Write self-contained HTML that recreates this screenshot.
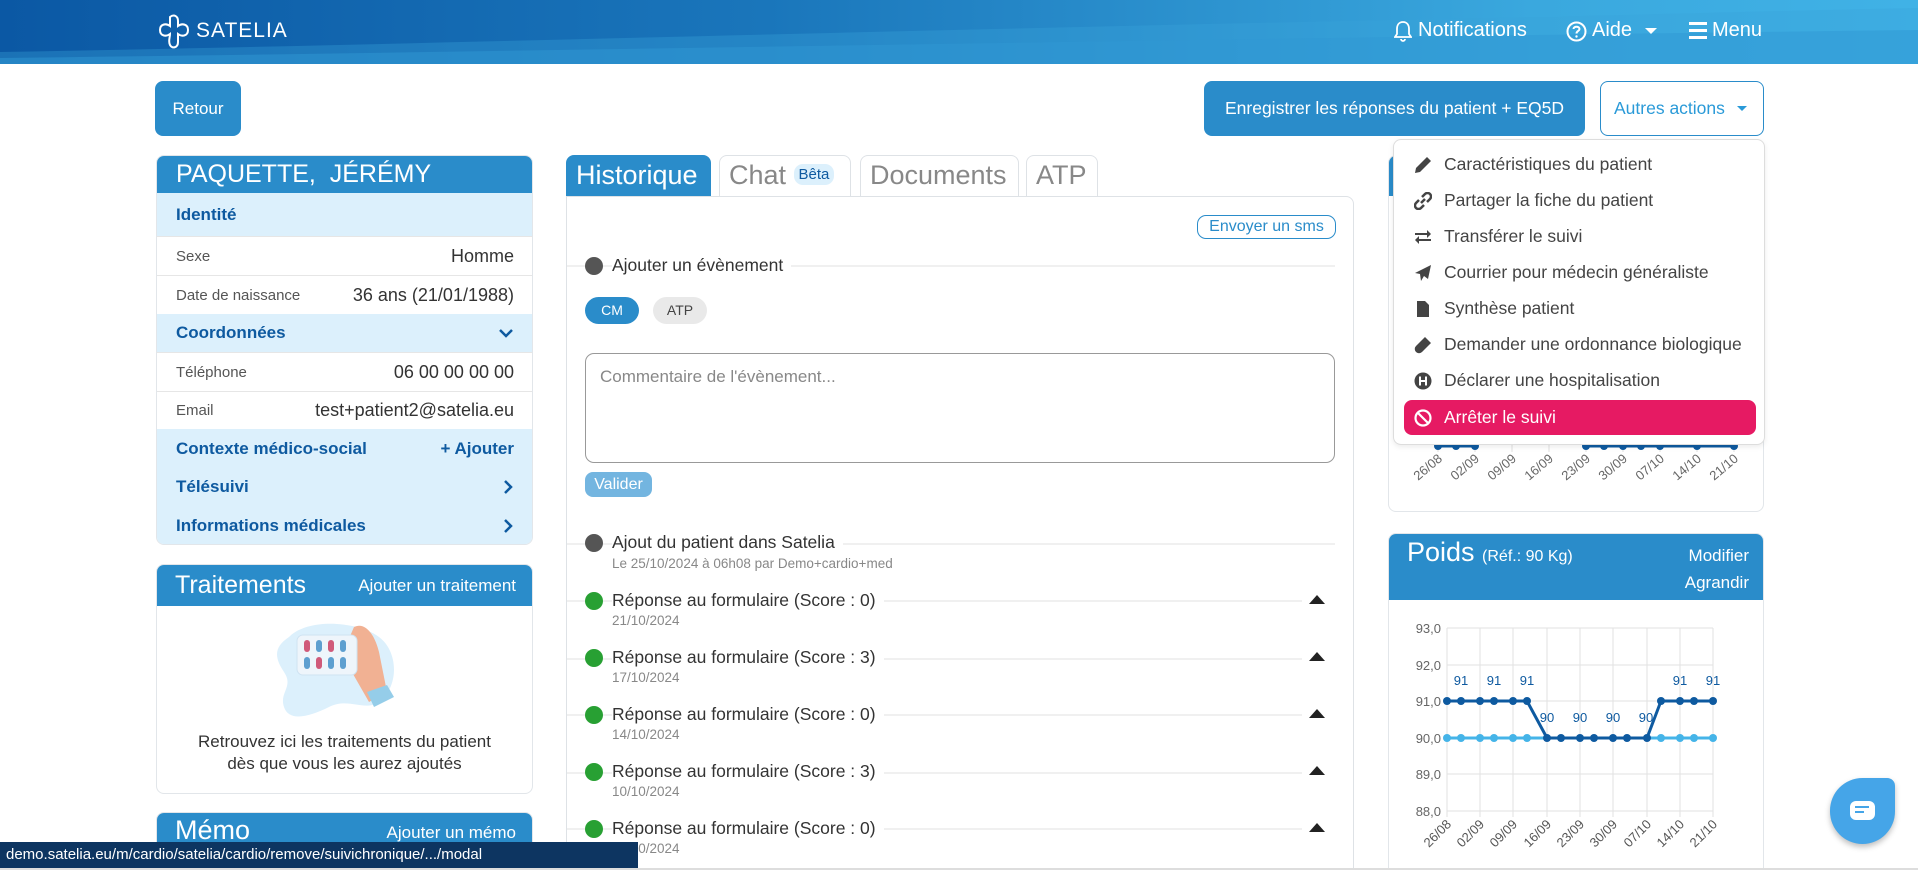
<!DOCTYPE html>
<html><head><meta charset="utf-8">
<style>
*{box-sizing:border-box;margin:0;padding:0}
html,body{width:1918px;height:870px;overflow:hidden}
body{background:#fff;font-family:"Liberation Sans",sans-serif;color:#333;position:relative}
.abs{position:absolute}
.hdr{position:absolute;left:0;top:0;width:1918px;height:64px;background:linear-gradient(90deg,#0b58a4 0%,#1a76bb 40%,#3aa8de 80%,#40b2e6 100%);overflow:hidden}
.nav{position:absolute;top:19px;color:#fff;font-size:20px}
.btn{position:absolute;background:#2a8cca;color:#fff;border-radius:8px;font-size:17px;display:flex;align-items:center;justify-content:center}
.card{position:absolute;border:1px solid #e2e6ea;border-radius:8px;overflow:hidden;background:#fff}
.ch{background:#2a8cca;color:#fff}
.row{position:absolute;left:0;width:100%;display:flex;justify-content:space-between;align-items:center;padding:0 18px 0 19px;border-top:1px solid #e6e6e6;font-size:16px}
.row .l{font-size:15px;color:#555}
.row .r{font-size:18px;color:#333}
.sec{background:#dcf0fc;color:#0e5aa0;font-weight:bold;font-size:17px;border-top:none}
.tab{position:absolute;top:155px;height:42px;border:1px solid #dee2e6;border-bottom:none;border-radius:8px 8px 0 0;font-size:27px;color:#888;padding:4px 9px 0}
.dot{position:absolute;width:18px;height:18px;border-radius:50%}
.ev{position:absolute;left:612px;font-size:17.5px;color:#333}
.sub{position:absolute;left:612px;font-size:13.5px;color:#888}
.line{position:absolute;height:2px;background:#f0f0f0}
.tri{position:absolute;left:1309px;width:0;height:0;border-left:8px solid transparent;border-right:8px solid transparent;border-bottom:9px solid #222}
.mi{position:absolute;left:1414px;font-size:17.5px;color:#444;display:flex;align-items:center}
.mi svg{width:18px;height:18px;margin-right:12px;fill:#444}
</style></head><body>

<div class="hdr">
<svg class="abs" style="left:0;top:0" width="1918" height="64"><path d="M0 64 L0 52 C400 45 900 30 1400 20 C1600 16 1800 10 1918 8 L1918 64Z" fill="#3aa3da" opacity=".35"/><path d="M0 64 L0 58 C500 52 1100 40 1918 30 L1918 64Z" fill="#2f98d3" opacity=".5"/></svg>
<svg class="abs" style="left:156px;top:14px" width="40" height="36" viewBox="0 0 40 36"><path d="M14 3 C18 0 22 2 22 7 L22 12 C26 9 32 10 32 16 C32 22 26 23 22 20 L22 28 C22 34 16 35 14 31 C12 27 14 24 14 20 C10 23 4 22 4 16 C4 10 10 9 14 12 Z" fill="none" stroke="#fff" stroke-width="2"/></svg>
<div class="nav" style="left:196px;top:19px;font-size:21px;letter-spacing:1px">SATELIA</div>
<svg class="abs" style="left:1394px;top:20px" width="18" height="22" viewBox="0 0 18 22"><path d="M9 2 C5 2 3 5 3 9 L3 14 L1 17 L17 17 L15 14 L15 9 C15 5 13 2 9 2Z M7 19 A2 2 0 0 0 11 19" fill="none" stroke="#fff" stroke-width="1.8"/></svg>
<div class="nav" style="left:1418px">Notifications</div>
<svg class="abs" style="left:1566px;top:21px" width="21" height="21" viewBox="0 0 21 21"><circle cx="10.5" cy="10.5" r="9" fill="none" stroke="#fff" stroke-width="2"/><path d="M7.5 8 C7.5 5 13.5 5 13.5 8 C13.5 10 10.5 10 10.5 12.5" fill="none" stroke="#fff" stroke-width="2"/><circle cx="10.5" cy="15.5" r="1.2" fill="#fff"/></svg>
<div class="nav" style="left:1592px">Aide</div>
<div class="abs" style="left:1645px;top:28px;border-left:6px solid transparent;border-right:6px solid transparent;border-top:6px solid #fff"></div>
<svg class="abs" style="left:1689px;top:22px" width="18" height="17"><rect y="0" width="18" height="3" fill="#fff"/><rect y="7" width="18" height="3" fill="#fff"/><rect y="14" width="18" height="3" fill="#fff"/></svg>
<div class="nav" style="left:1712px">Menu</div>
</div>

<div class="btn" style="left:155px;top:81px;width:86px;height:55px">Retour</div>
<div class="btn" style="left:1204px;top:81px;width:381px;height:55px;font-size:17.5px">Enregistrer les réponses du patient + EQ5D</div>
<div class="abs" style="left:1600px;top:81px;width:164px;height:55px;border:1px solid #2a8cca;border-radius:8px;color:#2a9ad8;font-size:17.5px;display:flex;align-items:center;padding-left:13px">Autres actions<span style="margin-left:12px;border-left:5px solid transparent;border-right:5px solid transparent;border-top:5px solid #2a9ad8"></span></div>

<!-- Left card -->
<div class="card" style="left:156px;top:155px;width:377px;height:390px">
<div class="ch" style="height:37px;font-size:25px;padding:4px 19px">PAQUETTE,&nbsp; JÉRÉMY</div>
<div class="row sec" style="top:37px;height:43px">Identité</div>
<div class="row" style="top:80px;height:39px"><span class="l">Sexe</span><span class="r">Homme</span></div>
<div class="row" style="top:119px;height:39px"><span class="l">Date de naissance</span><span class="r">36 ans (21/01/1988)</span></div>
<div class="row sec" style="top:158px;height:38px">Coordonnées<svg width="16" height="12" viewBox="0 0 16 12"><path d="M2 3 L8 9 L14 3" fill="none" stroke="#0e5aa0" stroke-width="2.5"/></svg></div>
<div class="row" style="top:196px;height:39px"><span class="l">Téléphone</span><span class="r">06 00 00 00 00</span></div>
<div class="row" style="top:235px;height:38px"><span class="l">Email</span><span class="r">test+patient2@satelia.eu</span></div>
<div class="row sec" style="top:273px;height:39px">Contexte médico-social<span>+ Ajouter</span></div>
<div class="row sec" style="top:312px;height:38px;border-top:none">Télésuivi<svg width="12" height="16" viewBox="0 0 12 16"><path d="M3 2 L9 8 L3 14" fill="none" stroke="#0e5aa0" stroke-width="2.5"/></svg></div>
<div class="row sec" style="top:350px;height:40px">Informations médicales<svg width="12" height="16" viewBox="0 0 12 16"><path d="M3 2 L9 8 L3 14" fill="none" stroke="#0e5aa0" stroke-width="2.5"/></svg></div>
</div>

<div class="card" style="left:156px;top:564px;width:377px;height:230px">
<div class="ch" style="height:41px;display:flex;justify-content:space-between;align-items:center;padding:0 16px 0 18px"><span style="font-size:25px">Traitements</span><span style="font-size:17px">Ajouter un traitement</span></div>
<svg class="abs" style="left:112px;top:52px" width="140" height="110" viewBox="0 0 140 110"><path d="M20 20 C40 0 90 5 110 20 C130 35 130 70 110 85 C95 95 80 80 60 90 C40 100 20 105 15 90 C10 75 25 70 15 55 C5 40 5 30 20 20Z" fill="#dcf0fc"/><path d="M85 10 C95 5 105 15 110 35 L118 75 L100 85 L80 50 L70 45 Z" fill="#f1b193"/><path d="M98 75 L118 68 L125 80 L105 90 Z" fill="#95cde9"/><rect x="28" y="18" width="60" height="40" rx="6" fill="#eef5fb" stroke="#cfe3f2"/><g fill="#d05a7a"><rect x="35" y="23" width="6" height="12" rx="3"/><rect x="59" y="23" width="6" height="12" rx="3"/><rect x="47" y="40" width="6" height="12" rx="3"/></g><g fill="#5d9fd0"><rect x="47" y="23" width="6" height="12" rx="3"/><rect x="71" y="23" width="6" height="12" rx="3"/><rect x="35" y="40" width="6" height="12" rx="3"/><rect x="59" y="40" width="6" height="12" rx="3"/><rect x="71" y="40" width="6" height="12" rx="3"/></g></svg>
<div class="abs" style="left:0;top:166px;width:100%;text-align:center;font-size:17px;line-height:22px;color:#333">Retrouvez ici les traitements du patient<br>dès que vous les aurez ajoutés</div>
</div>

<div class="card" style="left:156px;top:812px;width:377px;height:58px;border-radius:8px 8px 0 0">
<div class="ch" style="height:58px;display:flex;justify-content:space-between;align-items:flex-start;padding:2px 16px 0 18px"><span style="font-size:27px">Mémo</span><span style="font-size:17px;margin-top:8px">Ajouter un mémo</span></div>
</div>

<!-- Middle -->
<div class="tab" style="left:566px;width:145px;background:#2a8cca;color:#fff;border-color:#2a8cca">Historique</div>
<div class="tab" style="left:719px;width:132px">Chat <span style="font-size:15px;color:#0e5aa0;background:#dcf0fc;border-radius:9px;padding:2px 5px;vertical-align:5px">Bêta</span></div>
<div class="tab" style="left:860px;width:159px">Documents</div>
<div class="tab" style="left:1026px;width:72px">ATP</div>
<div class="abs" style="left:566px;top:196px;width:788px;height:680px;border:1px solid #dee2e6;border-radius:0 8px 0 0"></div>
<div class="abs" style="left:1197px;top:215px;width:139px;height:24px;border:1px solid #2a8cca;border-radius:9px;color:#2a8cca;font-size:16px;text-align:center;line-height:22px">Envoyer un sms</div>
<div class="line" style="left:567px;top:265px;width:768px"></div>
<div class="dot" style="left:585px;top:257px;background:#555"></div>
<div class="ev" style="top:255px;background:#fff;padding-right:8px">Ajouter un évènement</div>
<div class="abs" style="left:585px;top:297px;width:54px;height:27px;border-radius:14px;background:#2a8cca;color:#fff;font-size:14px;text-align:center;line-height:27px">CM</div>
<div class="abs" style="left:653px;top:297px;width:54px;height:27px;border-radius:14px;background:#e9e9e9;color:#444;font-size:14px;text-align:center;line-height:27px">ATP</div>
<div class="abs" style="left:585px;top:353px;width:750px;height:110px;border:1px solid #999;border-radius:9px;padding:13px 14px;color:#888;font-size:17px">Commentaire de l'évènement...</div>
<div class="abs" style="left:585px;top:472px;width:67px;height:25px;border-radius:8px;background:#73b5e0;color:#fff;font-size:16px;text-align:center;line-height:25px">Valider</div>

<div class="line" style="left:567px;top:543px;width:768px"></div>
<div class="dot" style="left:585px;top:534px;background:#555"></div>
<div class="ev" style="top:532px;background:#fff;padding-right:8px">Ajout du patient dans Satelia</div>
<div class="sub" style="top:556px">Le 25/10/2024 à 06h08 par Demo+cardio+med</div>

<div class="line" style="left:567px;top:600px;width:735px"></div><div class="dot" style="left:585px;top:592px;background:#28a033"></div><div class="ev" style="top:590px;background:#fff;padding-right:8px">Réponse au formulaire (Score : 0)</div><div class="sub" style="top:613px">21/10/2024</div><div class="tri" style="top:595px"></div>
<div class="line" style="left:567px;top:658px;width:735px"></div><div class="dot" style="left:585px;top:649px;background:#28a033"></div><div class="ev" style="top:647px;background:#fff;padding-right:8px">Réponse au formulaire (Score : 3)</div><div class="sub" style="top:670px">17/10/2024</div><div class="tri" style="top:652px"></div>
<div class="line" style="left:567px;top:714px;width:735px"></div><div class="dot" style="left:585px;top:706px;background:#28a033"></div><div class="ev" style="top:704px;background:#fff;padding-right:8px">Réponse au formulaire (Score : 0)</div><div class="sub" style="top:727px">14/10/2024</div><div class="tri" style="top:709px"></div>
<div class="line" style="left:567px;top:772px;width:735px"></div><div class="dot" style="left:585px;top:763px;background:#28a033"></div><div class="ev" style="top:761px;background:#fff;padding-right:8px">Réponse au formulaire (Score : 3)</div><div class="sub" style="top:784px">10/10/2024</div><div class="tri" style="top:766px"></div>
<div class="line" style="left:567px;top:828px;width:735px"></div><div class="dot" style="left:585px;top:820px;background:#28a033"></div><div class="ev" style="top:818px;background:#fff;padding-right:8px">Réponse au formulaire (Score : 0)</div><div class="sub" style="top:841px">07/10/2024</div><div class="tri" style="top:823px"></div>

<!-- Right column card 1 -->
<div class="card" style="left:1388px;top:155px;width:376px;height:357px">
<div class="ch" style="height:40px"></div>
<svg class="abs" style="left:0;top:0" width="376" height="357" font-family="Liberation Sans">
<g stroke="#e0e0e0"><line x1="49" y1="260" x2="49" y2="296"/><line x1="86" y1="260" x2="86" y2="296"/><line x1="123" y1="260" x2="123" y2="296"/><line x1="160" y1="260" x2="160" y2="296"/><line x1="197" y1="260" x2="197" y2="296"/><line x1="234" y1="260" x2="234" y2="296"/><line x1="271" y1="260" x2="271" y2="296"/><line x1="308" y1="260" x2="308" y2="296"/><line x1="345" y1="260" x2="345" y2="296"/></g>
<path d="M49 290 L67 290 L86 290 M197 290 L345 290" stroke="#0e5aa0" stroke-width="3" fill="none"/>
<g fill="#0e5aa0"><circle cx="49" cy="290" r="4"/><circle cx="67" cy="290" r="4"/><circle cx="86" cy="290" r="4"/><circle cx="197" cy="290" r="4"/><circle cx="215" cy="290" r="4"/><circle cx="234" cy="290" r="4"/><circle cx="252" cy="290" r="4"/><circle cx="271" cy="290" r="4"/><circle cx="308" cy="290" r="4"/><circle cx="345" cy="290" r="4"/></g>
<g font-size="13" fill="#666" text-anchor="end"><text transform="translate(54,304) rotate(-40)">26/08</text><text transform="translate(91,304) rotate(-40)">02/09</text><text transform="translate(128,304) rotate(-40)">09/09</text><text transform="translate(165,304) rotate(-40)">16/09</text><text transform="translate(202,304) rotate(-40)">23/09</text><text transform="translate(239,304) rotate(-40)">30/09</text><text transform="translate(276,304) rotate(-40)">07/10</text><text transform="translate(313,304) rotate(-40)">14/10</text><text transform="translate(350,304) rotate(-40)">21/10</text></g>
</svg>
</div>

<!-- Dropdown -->
<div class="abs" style="left:1393px;top:139px;width:372px;height:306px;background:#fff;border:1px solid #ddd;border-radius:8px;box-shadow:0 2px 6px rgba(0,0,0,.08)"></div>
<div class="mi" style="top:154px"><svg viewBox="0 0 18 18"><path d="M13 1 L17 5 L6 16 L1 17 L2 12 Z"/></svg>Caractéristiques du patient</div>
<div class="mi" style="top:190px"><svg viewBox="0 0 18 18"><path d="M7 11 L11 7 M8 5 L11 2 A3 3 0 0 1 16 7 L13 10 M10 13 L7 16 A3 3 0 0 1 2 11 L5 8" stroke="#444" stroke-width="2.5" fill="none"/></svg>Partager la fiche du patient</div>
<div class="mi" style="top:226px"><svg viewBox="0 0 18 18"><path d="M1 5 L13 5 L13 2 L17 6 L13 10 L13 7 L1 7Z M17 11 L5 11 L5 8 L1 12 L5 16 L5 13 L17 13Z"/></svg>Transférer le suivi</div>
<div class="mi" style="top:262px"><svg viewBox="0 0 18 18"><path d="M17 1 L1 9 L6 10 L7 17 L10 12 L14 15Z"/></svg>Courrier pour médecin généraliste</div>
<div class="mi" style="top:298px"><svg viewBox="0 0 18 18"><path d="M3 1 L11 1 L15 5 L15 17 L3 17Z"/></svg>Synthèse patient</div>
<div class="mi" style="top:334px"><svg viewBox="0 0 18 18"><path d="M11 1 L17 7 L8 16 A3 3 0 0 1 2 10Z"/></svg>Demander une ordonnance biologique</div>
<div class="mi" style="top:370px"><svg viewBox="0 0 18 18"><circle cx="9" cy="9" r="8.5"/><path d="M6 4.5 V13.5 M12 4.5 V13.5 M6 9 H12" stroke="#fff" stroke-width="2"/></svg>Déclarer une hospitalisation</div>
<div class="abs" style="left:1404px;top:400px;width:352px;height:35px;background:#e61a63;border-radius:8px"></div>
<div class="mi" style="top:407px;color:#fff"><svg viewBox="0 0 18 18"><circle cx="9" cy="9" r="7.5" fill="none" stroke="#fff" stroke-width="2.2"/><path d="M4 4 L14 14" stroke="#fff" stroke-width="2.2"/></svg>Arrêter le suivi</div>

<!-- Poids card -->
<div class="card" style="left:1388px;top:533px;width:376px;height:337px;border-radius:8px 8px 0 0">
<div class="ch" style="height:66px;position:relative"><span class="abs" style="left:18px;top:3px;font-size:27px">Poids <span style="font-size:16px">(Réf.: 90 Kg)</span></span><span class="abs" style="right:14px;top:8px;font-size:17px;text-align:right;line-height:27px">Modifier<br>Agrandir</span></div>
</div>
<svg class="abs" style="left:1388px;top:533px" width="376" height="337" font-family="Liberation Sans">
<g stroke="#e2e2e2"><line x1="59" y1="95" x2="325" y2="95"/><line x1="59" y1="132" x2="325" y2="132"/><line x1="59" y1="168" x2="325" y2="168"/><line x1="59" y1="205" x2="325" y2="205"/><line x1="59" y1="241" x2="325" y2="241"/><line x1="59" y1="278" x2="325" y2="278"/>
<line x1="59" y1="95" x2="59" y2="284"/><line x1="92" y1="95" x2="92" y2="284"/><line x1="125" y1="95" x2="125" y2="284"/><line x1="159" y1="95" x2="159" y2="284"/><line x1="192" y1="95" x2="192" y2="284"/><line x1="225" y1="95" x2="225" y2="284"/><line x1="259" y1="95" x2="259" y2="284"/><line x1="292" y1="95" x2="292" y2="284"/><line x1="325" y1="95" x2="325" y2="284"/></g>
<g font-size="13" fill="#666" text-anchor="end"><text x="53" y="100">93,0</text><text x="53" y="137">92,0</text><text x="53" y="173">91,0</text><text x="53" y="210">90,0</text><text x="53" y="246">89,0</text><text x="53" y="283">88,0</text></g>
<polyline points="59,205 325,205" fill="none" stroke="#45b4e8" stroke-width="3"/>
<g fill="#45b4e8"><circle cx="59" cy="205" r="4"/><circle cx="73" cy="205" r="4"/><circle cx="92" cy="205" r="4"/><circle cx="106" cy="205" r="4"/><circle cx="125" cy="205" r="4"/><circle cx="139" cy="205" r="4"/><circle cx="273" cy="205" r="4"/><circle cx="292" cy="205" r="4"/><circle cx="306" cy="205" r="4"/><circle cx="325" cy="205" r="4"/></g>
<polyline points="59,168 73,168 92,168 106,168 125,168 139,168 159,205 173,205 192,205 206,205 225,205 239,205 259,205 273,168 292,168 306,168 325,168" fill="none" stroke="#0e5aa0" stroke-width="3"/>
<g fill="#0e5aa0"><circle cx="59" cy="168" r="4"/><circle cx="73" cy="168" r="4"/><circle cx="92" cy="168" r="4"/><circle cx="106" cy="168" r="4"/><circle cx="125" cy="168" r="4"/><circle cx="139" cy="168" r="4"/><circle cx="159" cy="205" r="4"/><circle cx="173" cy="205" r="4"/><circle cx="192" cy="205" r="4"/><circle cx="206" cy="205" r="4"/><circle cx="225" cy="205" r="4"/><circle cx="239" cy="205" r="4"/><circle cx="259" cy="205" r="4"/><circle cx="273" cy="168" r="4"/><circle cx="292" cy="168" r="4"/><circle cx="306" cy="168" r="4"/><circle cx="325" cy="168" r="4"/></g>
<g font-size="13" fill="#0e5aa0" text-anchor="middle"><text x="73" y="152">91</text><text x="106" y="152">91</text><text x="139" y="152">91</text><text x="159" y="189">90</text><text x="192" y="189">90</text><text x="225" y="189">90</text><text x="258" y="189">90</text><text x="292" y="152">91</text><text x="325" y="152">91</text></g>
<g font-size="13" fill="#555" text-anchor="end"><text transform="translate(64,292) rotate(-45)">26/08</text><text transform="translate(97,292) rotate(-45)">02/09</text><text transform="translate(130,292) rotate(-45)">09/09</text><text transform="translate(164,292) rotate(-45)">16/09</text><text transform="translate(197,292) rotate(-45)">23/09</text><text transform="translate(230,292) rotate(-45)">30/09</text><text transform="translate(264,292) rotate(-45)">07/10</text><text transform="translate(297,292) rotate(-45)">14/10</text><text transform="translate(330,292) rotate(-45)">21/10</text></g>
</svg>

<div class="abs" style="left:1830px;top:778px;width:65px;height:66px;background:#45a5e8;border-radius:33px 8px 33px 33px;box-shadow:0 3px 6px rgba(0,0,0,.25)"></div>
<div class="abs" style="left:1850px;top:801px;width:25px;height:19px;background:#fff;border-radius:6px"></div>
<div class="abs" style="left:1855px;top:806px;width:14px;height:2px;background:#45a5e8"></div>
<div class="abs" style="left:1855px;top:811px;width:9px;height:2px;background:#45a5e8"></div>

<div class="abs" style="left:0;top:842px;width:638px;height:26px;background:#0d3561;color:#fff;font-size:15px;line-height:26px;padding-left:6px">demo.satelia.eu/m/cardio/satelia/cardio/remove/suivichronique/.../modal</div>
<div class="abs" style="left:0;top:868px;width:1918px;height:2px;background:#ddd"></div>
</body></html>
